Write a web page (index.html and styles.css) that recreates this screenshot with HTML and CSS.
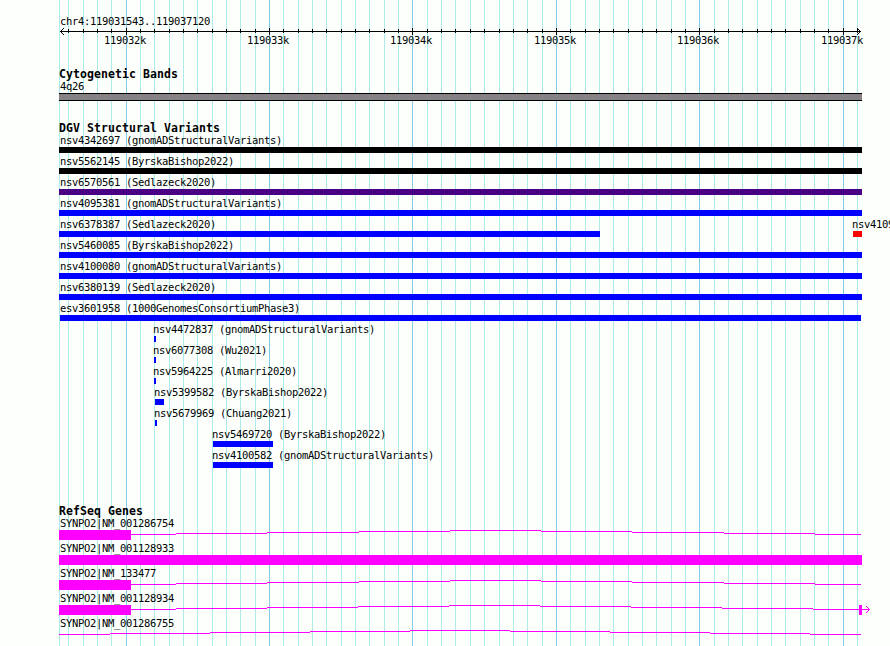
FILE: index.html
```
<!DOCTYPE html>
<html lang="en">
<head>
<meta charset="utf-8">
<title>Genome browser</title>
<link rel="stylesheet" href="styles.css">
</head>
<body>
<main class="browser">
<svg class="grid" width="890" height="646" shape-rendering="crispEdges" aria-hidden="true"></svg>
<section class="ruler">
  <p class="label">chr4:119031543..119037120</p>
  <svg class="axis" width="803" height="7" shape-rendering="crispEdges" aria-hidden="true"></svg>
  <div class="ticks"><span>119032k</span><span>119033k</span><span class="wide">119034k</span><span>119035k</span><span class="wide">119036k</span><span>119037k</span></div>
</section>
<section class="track bands">
  <h2>Cytogenetic Bands</h2>
  <p class="label">4q26</p>
  <div class="band"></div>
</section>
<section class="track variants">
  <h2>DGV Structural Variants</h2>
  <div class="rows" id="variants"></div>
</section>
<section class="track genes">
  <h2>RefSeq Genes</h2>
  <div class="rows" id="genes"></div>
</section>
</main>
<script src="script.js"></script>
</body>
</html>
```
FILE: styles.css
```
html, body {
  margin: 0;
  background: #fcfffc;
}
body {
  width: 890px;
  height: 646px;
  overflow: hidden;
  color: #000;
  font-family: "DejaVu Sans Mono", "Liberation Mono", monospace;
}
.browser {
  position: relative;
  box-sizing: border-box;
  width: 890px;
  height: 646px;
  padding: 15px 0 0 59px;
  overflow: hidden;
}
.grid {
  position: absolute;
  left: 0;
  top: 0;
}
section {
  position: relative;
}
.label, .ticks {
  margin: 0;
  height: 13px;
  padding-left: 1px;
  font-size: 10.5px;
  line-height: 13px;
  letter-spacing: -0.321px;
  white-space: pre;
}
h2 {
  margin: 0;
  height: 13px;
  font-size: 11.5px;
  line-height: 14px;
  letter-spacing: 0.077px;
  white-space: pre;
}
.axis {
  display: block;
}
.ticks {
  display: flex;
  margin-top: -1px;
  padding-left: 45px;
}
.ticks span {
  flex: none;
  width: 143px;
}
.ticks span:nth-child(3), .ticks span:nth-child(5) {
  width: 144px;
}
.bands {
  margin-top: 20px;
}
.band {
  box-sizing: border-box;
  width: 803px;
  height: 8px;
  border: solid #000;
  border-width: 1px 0;
  background: #848284;
}
.variants {
  margin-top: 20px;
}
.genes {
  margin-top: 34px;
}
.row {
  display: flex;
  height: 21px;
}
.feature {
  flex: none;
}
.bar {
  height: 6px;
}
.black { background: #000; }
.purple { background: #4a0084; }
.blue { background: #00f; }
.red { background: #f00; }
.gene {
  height: 25px;
}
.gene svg {
  display: block;
  fill: #f0f;
}
```
FILE: script.js
```
const rect = (x, y, w, h, fill) =>
  `<rect x="${x}" y="${y}" width="${w}" height="${h}"${fill ? ` fill="${fill}"` : ''}/>`;

// Grid lines and ruler ticks, one every 100 bases
const START = 119031543, SCALE = 800 / 5577;
let grid = rect(59, 0, 1, 646, '#adebeb');
let axis = rect(1, 3, 801, 1)
  + rect(2, 2, 1, 1) + rect(3, 1, 1, 1) + rect(4, 0, 1, 1)
  + rect(2, 4, 1, 1) + rect(3, 5, 1, 1) + rect(4, 6, 1, 1)
  + rect(800, 2, 1, 1) + rect(799, 1, 1, 1) + rect(798, 0, 1, 1)
  + rect(800, 4, 1, 1) + rect(799, 5, 1, 1) + rect(798, 6, 1, 1);
for (let p = 119031600; p <= 119037100; p += 100) {
  const x = Math.round(60 + (p - START) * SCALE);
  const major = p % 1000 === 0;
  grid += rect(x, 0, 1, 646, major ? '#84cbe7' : '#adebeb');
  axis += major ? rect(x - 59, 0, 1, 7) : rect(x - 59, 1, 1, 4);
}
document.querySelector('.grid').innerHTML = grid;
document.querySelector('.axis').innerHTML = axis;

// Each feature: label, label x, bar x, bar width, colour
const variants = [
  [['nsv4342697 (gnomADStructuralVariants)', 60, 59, 803, 'black']],
  [['nsv5562145 (ByrskaBishop2022)', 60, 59, 803, 'black']],
  [['nsv6570561 (Sedlazeck2020)', 60, 59, 803, 'purple']],
  [['nsv4095381 (gnomADStructuralVariants)', 60, 59, 803, 'blue']],
  [['nsv6378387 (Sedlazeck2020)', 60, 59, 541, 'blue'],
   ['nsv4109', 852, 853, 9, 'red']],
  [['nsv5460085 (ByrskaBishop2022)', 60, 59, 803, 'blue']],
  [['nsv4100080 (gnomADStructuralVariants)', 60, 59, 803, 'blue']],
  [['nsv6380139 (Sedlazeck2020)', 60, 59, 803, 'blue']],
  [['esv3601958 (1000GenomesConsortiumPhase3)', 60, 60, 801, 'blue']],
  [['nsv4472837 (gnomADStructuralVariants)', 153, 154, 2, 'blue']],
  [['nsv6077308 (Wu2021)', 153, 154, 2, 'blue']],
  [['nsv5964225 (Almarri2020)', 153, 154, 2, 'blue']],
  [['nsv5399582 (ByrskaBishop2022)', 154, 155, 9, 'blue']],
  [['nsv5679969 (Chuang2021)', 154, 155, 2, 'blue']],
  [['nsv5469720 (ByrskaBishop2022)', 212, 213, 60, 'blue']],
  [['nsv4100582 (gnomADStructuralVariants)', 212, 213, 60, 'blue']]
];
document.getElementById('variants').innerHTML = variants.map(row => {
  let end = 59;
  return '<div class="row">' + row.map(([name, lx, bx, w, colour]) => {
    const left = Math.min(lx, bx), width = bx + w - left, gap = left - end;
    end = left + width;
    return `<div class="feature" style="width:${width}px;margin-left:${gap}px">`
      + `<p class="label" style="padding-left:${lx - left}px">${name}</p>`
      + `<div class="bar ${colour}" style="width:${w}px;margin-left:${bx - left}px"></div></div>`;
  }).join('') + '</div>';
}).join('');

// Introns rise and fall one pixel at each listed x
const intron = xs => xs.slice(0, -1).map((x, i) =>
  rect(x - 59, Math.abs(4 - i), xs[i + 1] - x, 1)).join('');
const spliced = rect(0, 0, 72, 10)
  + intron([131, 176, 267, 359, 450, 541, 632, 724, 815, 861]);
const genes = [
  ['SYNPO2|NM_001286754', spliced],
  ['SYNPO2|NM_001128933', rect(0, 0, 803, 10)],
  ['SYNPO2|NM_133477', spliced],
  ['SYNPO2|NM_001128934', rect(0, 0, 72, 10)
    + intron([131, 176, 267, 358, 449, 540, 631, 722, 813, 870])
    + rect(800, 0, 3, 10)
    + rect(809, 3, 1, 1) + rect(808, 2, 1, 1) + rect(807, 1, 1, 1)
    + rect(809, 5, 1, 1) + rect(808, 6, 1, 1) + rect(807, 7, 1, 1)],
  ['SYNPO2|NM_001286755', intron([59, 110, 210, 310, 410, 510, 610, 710, 810, 861])]
];
document.getElementById('genes').innerHTML = genes.map(([name, shape]) =>
  `<div class="gene"><p class="label">${name}</p>`
  + `<svg width="815" height="10" shape-rendering="crispEdges" aria-hidden="true">${shape}</svg></div>`).join('');
```
